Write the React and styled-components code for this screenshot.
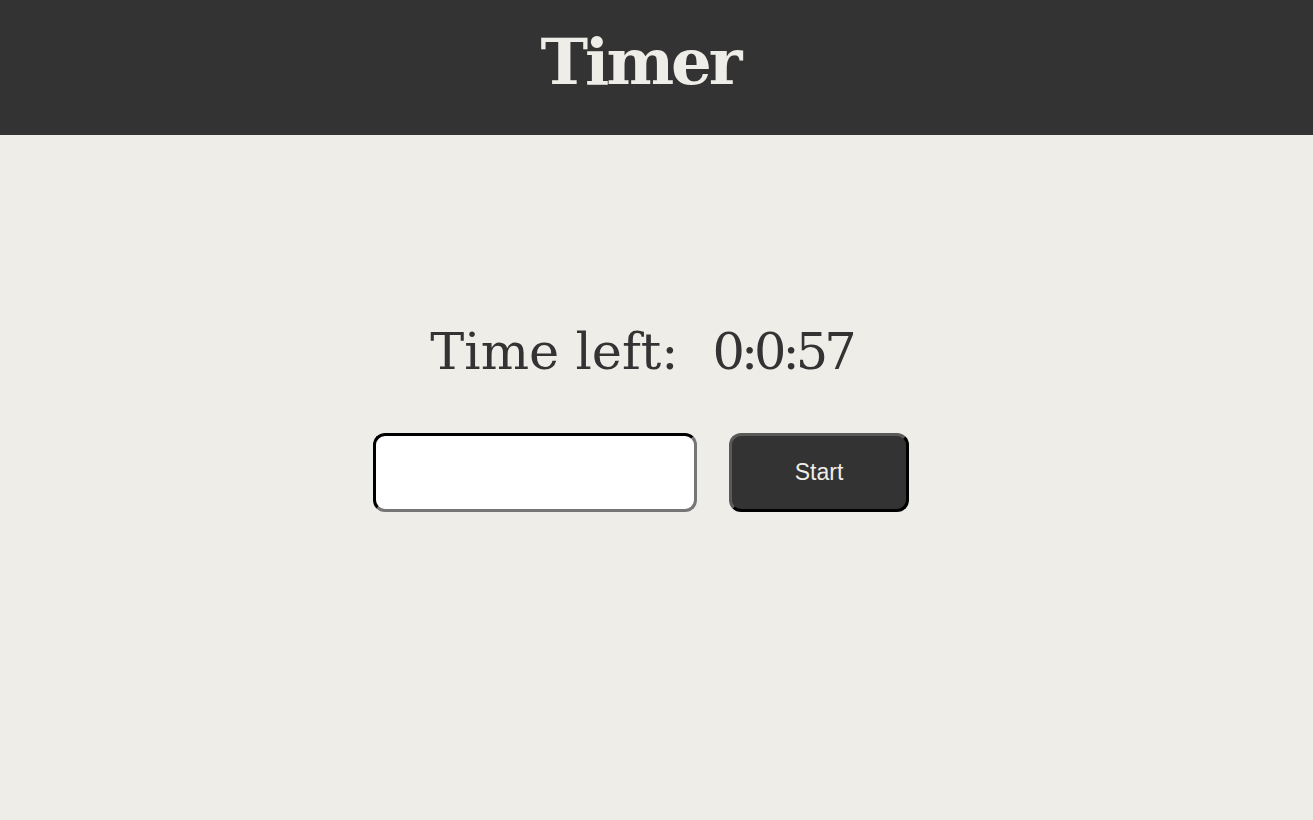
import React from "react";
import styled, { createGlobalStyle } from "styled-components";

const Global = createGlobalStyle`
  html, body { margin: 0; padding: 0; background: #efede8; }
  body { font-family: "DejaVu Serif", serif; }
`;

const Page = styled.div`
  padding-right: 30px;
`;

const Header = styled.header`
  height: 135px;
  box-sizing: border-box;
  padding-bottom: 12px;
  margin-right: -30px;
  padding-right: 33px;
  background: #333333;
  display: flex;
  align-items: center;
  justify-content: center;
`;

const Title = styled.h1`
  margin: 0;
  color: #efede8;
  font-family: "DejaVu Serif", serif;
  font-weight: bold;
  font-size: 64px;
  letter-spacing: -3px;
  line-height: 1;
`;

const Main = styled.main`
  display: flex;
  flex-direction: column;
  align-items: center;
  padding-top: 187px;
`;

const TimeRow = styled.div`
  display: flex;
  align-items: baseline;
  gap: 34px;
  color: #333333;
  font-family: "DejaVu Serif", serif;
  font-size: 51px;
  line-height: 60px;
`;

const Label = styled.span``;

const Clock = styled.span`
  letter-spacing: -4px;
`;

const Controls = styled.div`
  display: flex;
  gap: 32px;
  margin-top: 51px;
  margin-left: -1px;
`;

const Input = styled.input`
  box-sizing: border-box;
  width: 324px;
  height: 79px;
  border: 3px inset #767676;
  border-top-color: #222222;
  border-left-color: #222222;
  border-radius: 12px;
  background: #ffffff;
  outline: none;
`;

const Button = styled.button`
  box-sizing: border-box;
  width: 180px;
  height: 79px;
  border: 3px outset #000;
  border-top-color: #5a5a5a;
  border-left-color: #5a5a5a;
  border-radius: 12px;
  background: #333333;
  color: #efede8;
  font-family: "Liberation Sans", Arial, sans-serif;
  font-size: 23px;
`;

export default function App() {
  return (
    <Page>
      <Global />
      <Header>
        <Title>Timer</Title>
      </Header>
      <Main>
        <TimeRow>
          <Label>Time left:</Label>
          <Clock>0:0:57</Clock>
        </TimeRow>
        <Controls>
          <Input type="text" />
          <Button>Start</Button>
        </Controls>
      </Main>
    </Page>
  );
}
